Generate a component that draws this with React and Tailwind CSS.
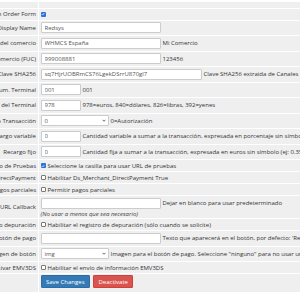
import React from "react";

const Label = ({ children }) => (
  <div className="w-[100px] shrink-0 bg-[#efefef] flex items-center justify-end pr-[2px] whitespace-nowrap text-[#333]">
    {children}
  </div>
);

const Row = ({ label, h, children, start }) => (
  <div className={`flex gap-px ${h}`}>
    <Label>{label}</Label>
    <div
      className={`flex-1 bg-[#efefef] flex ${start ? "flex-col justify-center" : "items-center"} pl-[1.5px] whitespace-nowrap`}
    >
      {children}
    </div>
  </div>
);

const Input = ({ value, w }) => (
  <input
    readOnly
    defaultValue={value}
    className={`${w} h-[11px] shrink-0 border border-[#ccc] bg-white rounded-[1px] px-[3px] text-[6px] text-[#555] outline-none`}
  />
);

const Select = ({ value }) => (
  <div className="w-[68px] h-[11px] shrink-0 border border-[#ccc] bg-white rounded-[1px] pl-[3px] pr-[2px] flex items-center justify-between text-[#555]">
    <span>{value}</span>
    <svg width="4" height="3" viewBox="0 0 8 5">
      <path d="M1 1l3 3 3-3" stroke="#444" strokeWidth="1.6" fill="none" />
    </svg>
  </div>
);

const Check = ({ on }) =>
  on ? (
    <span className="w-[5px] h-[5px] shrink-0 rounded-[1px] bg-[#2a73d9] flex items-center justify-center">
      <svg width="4" height="4" viewBox="0 0 8 8">
        <path d="M1.5 4.2l1.8 1.8 3.4-3.8" stroke="#fff" strokeWidth="1.5" fill="none" />
      </svg>
    </span>
  ) : (
    <span className="w-[5px] h-[5px] shrink-0 rounded-[1px] border border-[#777] bg-white" />
  );

const Desc = ({ children }) => <span className="ml-[2px] text-[#333]">{children}</span>;

export default function App() {
  const IH = "h-[14.5px]";
  const CH = "h-[11px]";
  return (
    <div className="w-[300px] h-[300px] overflow-hidden bg-white font-['Open_Sans',sans-serif] text-[6px] leading-none text-[#333]">
      <div className="pt-[2px] ml-[-62px] w-[760px] flex flex-col gap-px">
        <div className="flex gap-px h-[5.5px]">
          <div className="w-[100px] bg-[#efefef]" />
          <div className="flex-1 bg-[#efefef]" />
        </div>
        <Row label="Show on Order Form" h={CH}>
          <Check on />
        </Row>
        <Row label="Display Name" h={IH}>
          <Input value="Redsys" w="w-[120px]" />
        </Row>
        <Row label="Nombre del comercio" h={IH}>
          <Input value="WHMCS España" w="w-[120px]" />
          <Desc>Mi Comercio</Desc>
        </Row>
        <Row label="Código comercio (FUC)" h={IH}>
          <Input value="999008881" w="w-[120px]" />
          <Desc>123456</Desc>
        </Row>
        <Row label="Clave SHA256" h={IH}>
          <Input value="sq7HjrUOBRmCS76LgekDSrrU870gl7" w="w-[161px]" />
          <Desc>Clave SHA256 extraida de Canales</Desc>
        </Row>
        <Row label="Num. Terminal" h={IH}>
          <Input value="001" w="w-[40px]" />
          <Desc>001</Desc>
        </Row>
        <Row label="Moneda del Terminal" h={IH}>
          <Input value="978" w="w-[40px]" />
          <Desc>978=euros, 840=dólares, 826=libras, 392=yenes</Desc>
        </Row>
        <Row label="Tipo Transacción" h={IH}>
          <Select value="0" />
          <Desc>0=Autorización</Desc>
        </Row>
        <Row label="Recargo variable" h={IH}>
          <Input value="0" w="w-[40px]" />
          <Desc>
            Cantidad variable a sumar a la transacción, expresada en porcentaje sin símbolo (ej: 0.35)
          </Desc>
        </Row>
        <Row label="Recargo fijo" h={IH}>
          <Input value="0" w="w-[40px]" />
          <Desc>Cantidad fija a sumar a la transacción, expresada en euros sin símbolo (ej: 0.35)</Desc>
        </Row>
        <Row label="Modo de Pruebas" h={CH}>
          <Check on />
          <Desc>Seleccione la casilla para usar URL de pruebas</Desc>
        </Row>
        <Row label="DirectPayment" h={CH}>
          <Check />
          <Desc>Habilitar Ds_Merchant_DirectPayment True</Desc>
        </Row>
        <Row label="Permitir pagos parciales" h={CH}>
          <Check />
          <Desc>Permitir pagos parciales</Desc>
        </Row>
        <Row label="URL Callback" h="h-[22px]" start>
          <div className="flex items-center">
            <Input value="" w="w-[120px]" />
            <Desc>Dejar en blanco para usar predeterminado</Desc>
          </div>
          <span className="italic text-[#444] mt-[2px]">(No usar a menos que sea necesario)</span>
        </Row>
        <Row label="Modo depuración" h={CH}>
          <Check />
          <Desc>Habilitar el registro de depuración (sólo cuando se solicite)</Desc>
        </Row>
        <Row label="Texto botón de pago" h={IH}>
          <Input value="" w="w-[120px]" />
          <Desc>Texto que aparecerá en el botón, por defecto: 'Realizar pago'</Desc>
        </Row>
        <Row label="Imagen de botón" h={IH}>
          <Select value="img" />
          <Desc>Imagen para el botón de pago. Seleccione "ninguno" para no usar una imagen</Desc>
        </Row>
        <Row label="Activar EMV3DS" h={CH}>
          <Check />
          <Desc>Habilitar el envío de información EMV3DS</Desc>
        </Row>
        <div className="flex gap-px h-[18px]">
          <div className="w-[100px] shrink-0 bg-[#efefef]" />
          <div className="flex-1 bg-[#efefef] flex items-start pt-[1px] pl-[1.5px] gap-[3px]">
            <button className="h-[13px] px-[4.5px] bg-[#337ab7] border border-[#2e6da4] rounded-[1px] text-white text-[6px]">
              Save Changes
            </button>
            <button className="h-[13px] px-[4.5px] bg-[#d9534f] border border-[#d43f3a] rounded-[1px] text-white text-[6px]">
              Deactivate
            </button>
          </div>
        </div>
      </div>
    </div>
  );
}
